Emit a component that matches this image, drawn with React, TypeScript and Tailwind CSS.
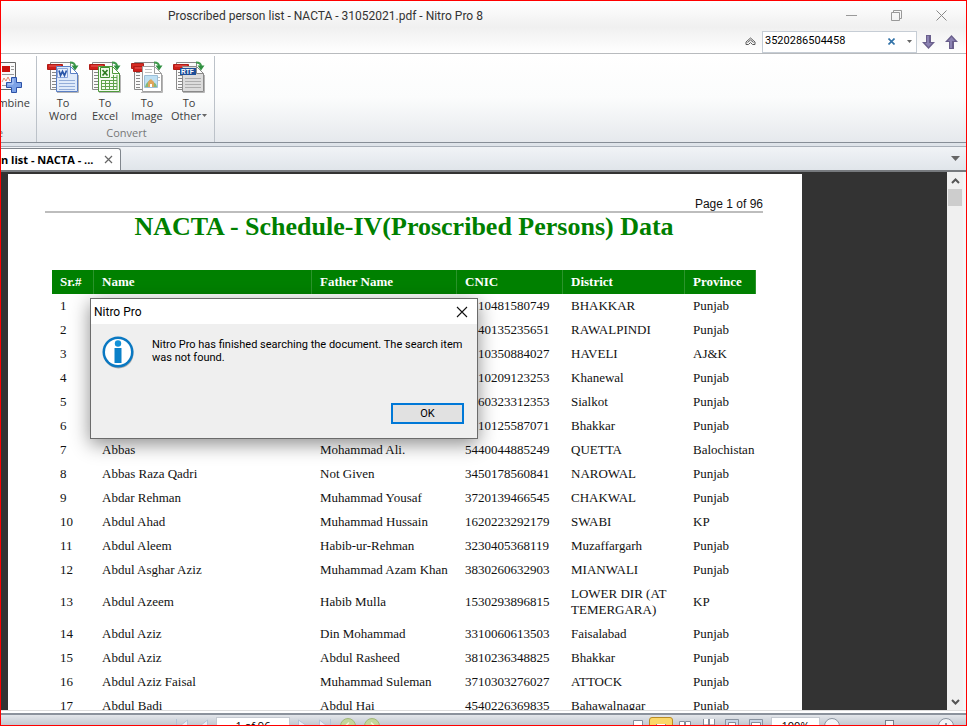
import React from "react";

type Kind = "word" | "excel" | "image" | "other";

// Rows 1-6 lie partly behind the dialog; only their uncovered values are listed.
const rows: string[][] = [
  ["1", "", "", "10481580749", "BHAKKAR", "Punjab"],
  ["2", "", "", "40135235651", "RAWALPINDI", "Punjab"],
  ["3", "", "", "10350884027", "HAVELI", "AJ&K"],
  ["4", "", "", "10209123253", "Khanewal", "Punjab"],
  ["5", "", "", "60323312353", "Sialkot", "Punjab"],
  ["6", "", "", "10125587071", "Bhakkar", "Punjab"],
  ["7", "Abbas", "Mohammad Ali.", "5440044885249", "QUETTA", "Balochistan"],
  ["8", "Abbas Raza Qadri", "Not Given", "3450178560841", "NAROWAL", "Punjab"],
  ["9", "Abdar Rehman", "Muhammad Yousaf", "3720139466545", "CHAKWAL", "Punjab"],
  ["10", "Abdul Ahad", "Muhammad Hussain", "1620223292179", "SWABI", "KP"],
  ["11", "Abdul Aleem", "Habib-ur-Rehman", "3230405368119", "Muzaffargarh", "Punjab"],
  ["12", "Abdul Asghar Aziz", "Muhammad Azam Khan", "3830260632903", "MIANWALI", "Punjab"],
  ["13", "Abdul Azeem", "Habib Mulla", "1530293896815", "LOWER DIR (AT TEMERGARA)", "KP"],
  ["14", "Abdul Aziz", "Din Mohammad", "3310060613503", "Faisalabad", "Punjab"],
  ["15", "Abdul Aziz", "Abdul Rasheed", "3810236348825", "Bhakkar", "Punjab"],
  ["16", "Abdul Aziz Faisal", "Muhammad Suleman", "3710303276027", "ATTOCK", "Punjab"],
  ["17", "Abdul Badi", "Abdul Hai", "4540226369835", "Bahawalnagar", "Punjab"],
];

function ConvertIcon({ kind }: { kind: Kind }) {
  const c = { word: "#5a7fc4", excel: "#4f9a3c", image: "#a0a0a0", other: "#8a8a8a" }[kind];
  const fill = { word: "#dfeafa", excel: "#f4fbf0", image: "#ffffff", other: "#dcdcdc" }[kind];
  const front = kind === "image" ? "M11.500 6.500h12l7 7v18h-19z" : "M9.500 6.500h14l7 7v18h-21z";
  return (
    <svg width="32" height="34" viewBox="0 0 32 34" aria-hidden="true">
      <path d="M3.500 2.500h20v27h-20z" fill="#fafafa" stroke="#8a8a8a" />
      <path d="M5 12.500h4M5 15.500h4M5 18.500h4M5 21.500h4M5 24.500h4M5 27.500h4" stroke="#888" />
      {kind === "image" && <path d="M0.500 3.500h12v5h-12z" fill="#d62b22" stroke="#a8231c" />}
      <path d={kind === "image" ? "M2.500 6.500h12v5h-12z" : "M0.500 4.500h15v5h-15z"} fill="#cf1f1a" stroke="#b01c16" />
      <path d={kind === "image" ? "M4 8h9" : "M2 6h12"} stroke="#e8615a" />
      <path d="M10 32.500h21.500V15" fill="none" stroke="#b5b5b5" />
      <path d={front} fill={fill} stroke={c} />
      <path d="M23.500 6.500v7h7z" fill="#fff" stroke={c} />
      <path d="M23 2.500c3 0 5 1 5 4" fill="none" stroke="#3f9a4c" strokeWidth="2" />
      <path d="M24.500 5.500h7l-3.500 5z" fill="#2f9040" />
      {kind === "word" && (
        <g>
          <path d="M10.500 8.500h10v9h-10z" fill="#e8effb" stroke="#8ba5da" />
          <path d="M12 10.500l1.500 5 2-4 2 4 2-5" fill="none" stroke="#2a56a8" strokeWidth="1.700" />
          <path d="M12 20.500h16M12 23.500h16M12 26.500h16M12 29.500h16" stroke="#93add9" />
        </g>
      )}
      {kind === "excel" && (
        <g>
          <path d="M11.500 7.500h9v10h-9z" fill="#eef9e8" stroke="#3e8d2d" />
          <path d="M13.500 10l5 5.500M18.500 10l-5 5.500" stroke="#2b7a1d" strokeWidth="1.700" />
          <path d="M12 20.500h16M12 23.500h16M12 26.500h16M12 29.500h16M12.500 20v10M16.500 20v10M20.500 20v10M24.500 15v15M28 15v15M22 17.500h6" stroke="#5da34b" />
        </g>
      )}
      {kind === "image" && (
        <g>
          <path d="M14 9.500h7M14 12.500h7M26 17.500h3M26 20.500h3" stroke="#c2c2c2" />
          <path d="M13.500 15.500h13v12h-13z" fill="#bfe0f3" stroke="#9cbfd8" />
          <path d="M14 27l1-3 4-4.500 6 4.500 1 3z" fill="#86b878" />
          <path d="M17 27v-5l3-3 3 3v5z" fill="#dea55c" />
          <path d="M19 24h2v3h-2z" fill="#fff" />
        </g>
      )}
      {kind === "other" && (
        <g>
          <path d="M7 8h16v7H7z" fill="#1d4f9a" />
          <text x="8" y="14" fontSize="6.500" fontWeight="bold" fill="#fff" fontFamily="Liberation Sans, sans-serif">RTF</text>
          <path d="M12 18.500h16M12 21.500h16M12 24.500h16M12 27.500h16" stroke="#adadad" />
        </g>
      )}
    </svg>
  );
}

function ConvertButton({ kind, label, menu }: { kind: Kind; label: string; menu?: boolean }) {
  return (
    <button className="flex w-[42px] flex-col items-center text-[11px] leading-[13px] text-[#3c3c3c]">
      <ConvertIcon kind={kind} />
      <span className="mt-[2px]">To</span>
      <span className="flex items-center gap-px whitespace-nowrap">
        {label}
        {menu && (
          <svg width="5" height="3" viewBox="0 0 5 3" aria-hidden="true"><path d="M0 0h5L2.500 3z" fill="#666" /></svg>
        )}
      </span>
    </button>
  );
}

function CombineIcon() {
  return (
    <svg width="32" height="34" viewBox="0 0 32 34" className="shrink-0" aria-hidden="true">
      <path d="M1.500 2.500h24v27h-24z" fill="#fafafa" stroke="#666" />
      <path d="M12 6h8v6h-8z" fill="#c9120d" />
      <path d="M21 6.500h3M21 9.500h3M12 14.500h12" stroke="#999" />
      <path d="M12 22l2-4 2 3 2-4 2 4" fill="none" stroke="#e08a70" />
      <path d="M12 25.500h7" stroke="#999" />
      <path d="M21.500 17.500h5v5h5v5h-5v5h-5v-5h-5v-5h5z" fill="#7da2e6" stroke="#2c51a6" />
      <path d="M23 19v5h-5" fill="none" stroke="#bcd0f7" />
    </svg>
  );
}

function SearchArrow({ up }: { up?: boolean }) {
  return (
    <svg width="13" height="14" viewBox="0 0 13 14" aria-hidden="true">
      <path d={up ? "M6.500 0L13 7H9v7H4V7H0z" : "M6.500 14L13 7H9V0H4v7H0z"} fill="#6a5f8c" />
      <path d={up ? "M6.500 2L10 6H7v7H5V6H3z" : "M6.500 12L10 8H7V1H5v7H3z"} fill="#8b82b2" />
    </svg>
  );
}

function TitleBar() {
  return (
    <header className="border-b border-[#b8bbbe] bg-gradient-to-b from-white via-[#f0f0f0] to-white text-[#333]">
      <div className="flex h-[29px] items-center pr-[2px]">
        <h1 className="flex-1 pl-[167px] font-[Roboto,sans-serif] text-[12px] leading-4">Proscribed person list - NACTA - 31052021.pdf - Nitro Pro 8</h1>
        <button aria-label="Minimize" className="flex w-[45px] justify-center">
          <svg width="11" height="11" viewBox="0 0 11 11"><path d="M0 5.500h11" stroke="#999" /></svg>
        </button>
        <button aria-label="Restore" className="flex w-[45px] justify-center">
          <svg width="11" height="11" viewBox="0 0 11 11"><path d="M.5 2.500h8v8h-8zM2.500 2.500v-2h8v8h-2" fill="none" stroke="#999" /></svg>
        </button>
        <button aria-label="Close" className="flex w-[45px] justify-center">
          <svg width="11" height="11" viewBox="0 0 11 11"><path d="M.5.5l10 10M10.500.5l-10 10" stroke="#888" /></svg>
        </button>
      </div>
      <div className="flex h-[23px] items-center justify-end pr-2">
        <button aria-label="Collapse ribbon" className="mr-[6px]">
          <svg width="11" height="9" viewBox="0 0 11 9">
            <path d="M1 5l4.500-4L10 5v2.500H7.500l-2-2-2 2H1zM2.500 5.500l3-2.500 3 2.500" fill="none" stroke="#5a5a5a" />
          </svg>
        </button>
        <form className="flex h-[22px] w-[155px] items-center border border-[#c6cdd5] bg-white pl-[2px]" onSubmit={(e) => e.preventDefault()}>
          <input aria-label="Find" defaultValue="3520286504458" className="h-[20px] w-0 flex-1 bg-transparent pb-[2px] font-[Roboto,sans-serif] text-[11px] text-black outline-none" />
          <button type="button" aria-label="Clear" className="mr-[12px]">
            <svg width="7" height="7" viewBox="0 0 7 7"><path d="M.5.5l6 6M6.500.5l-6 6" stroke="#3172a8" strokeWidth="1.600" /></svg>
          </button>
          <button type="button" aria-label="Find options" className="mr-[4px]">
            <svg width="5" height="3" viewBox="0 0 5 3"><path d="M0 0h5L2.500 3z" fill="#666" /></svg>
          </button>
        </form>
        <button aria-label="Find next" className="ml-[5px]"><SearchArrow /></button>
        <button aria-label="Find previous" className="ml-[10px]"><SearchArrow up /></button>
      </div>
    </header>
  );
}

function Ribbon() {
  return (
    <nav className="flex h-[89px] border-b border-[#878e97] bg-gradient-to-b from-white via-[#fbfcfc] to-[#e6e9ed]">
      <section className="mt-[2px] flex w-[36px] flex-col justify-between overflow-hidden border-r border-[#bcc2c9] pb-[2px]">
        <button className="mt-[4px] flex flex-col items-end self-end pr-[6px] text-[11px] leading-[13px] text-[#3c3c3c]">
          <span className="mr-[8px] flex w-[21px] justify-end overflow-hidden"><CombineIcon /></span>
          <span className="mt-[2px]">mbine</span>
        </button>
        <p className="-ml-[4px] text-[11px] leading-[14px] text-[#777]">e</p>
      </section>
      <section className="mt-[2px] flex w-[178px] flex-col justify-between border-r border-[#bcc2c9] pb-[2px]">
        <div className="mt-[4px] flex pl-[5px]">
          <ConvertButton kind="word" label="Word" />
          <ConvertButton kind="excel" label="Excel" />
          <ConvertButton kind="image" label="Image" />
          <ConvertButton kind="other" label="Other" menu />
        </div>
        <h2 className="pl-[2px] text-center text-[11px] leading-[14px] text-[#777]">Convert</h2>
      </section>
    </nav>
  );
}

function TabStrip() {
  return (
    <div className="flex h-[29px] flex-col border-b-2 border-[#777a7e] bg-gradient-to-b from-[#f4f6f9] to-[#e0e5ea]">
      <div className="h-1 border-b border-[#a9b0b9] bg-[#dfe4ea]" />
      <div className="flex flex-1 items-end justify-between">
        <div className="flex h-[22px] w-[120px] items-center justify-between rounded-tr-[3px] border-t border-r border-[#80868d] bg-white pr-[7px]">
          <span className="text-[11px] leading-4 font-bold text-black">n list - NACTA - ...</span>
          <button aria-label="Close tab">
            <svg width="9" height="9" viewBox="0 0 9 9"><path d="M1 1l7 7M8 1L1 8" stroke="#666" strokeWidth="1.200" /></svg>
          </button>
        </div>
        <button aria-label="Tab list" className="mr-[6px] flex h-full items-center">
          <svg width="9" height="5" viewBox="0 0 9 5"><path d="M0 0h9L4.500 5z" fill="#666" /></svg>
        </button>
      </div>
    </div>
  );
}

function DocumentPage() {
  return (
    <article className="mt-[2px] ml-[7px] w-[794px] shrink-0 bg-white pt-[23px] pr-[39px] pl-[37px] text-[#111]">
      <p className="border-b-2 border-[#bdbdbd] text-right font-['Liberation_Sans',Arial,sans-serif] text-[12px] leading-[14px]">Page 1 of 96</p>
      <h2 className="text-center font-['Liberation_Serif','Times_New_Roman',serif] text-[26px] leading-[28px] font-bold text-[#008000]">
        NACTA - Schedule-IV(Proscribed Persons) Data
      </h2>
      <table className="mt-[29px] ml-[7px] w-[704px] table-fixed border-collapse text-left font-['Liberation_Serif','Times_New_Roman',serif] text-[13px] leading-4">
        <colgroup>
          <col className="w-[42px]" />
          <col className="w-[218px]" />
          <col className="w-[145px]" />
          <col className="w-[106px]" />
          <col className="w-[122px]" />
          <col className="w-[71px]" />
        </colgroup>
        <thead>
          <tr className="bg-[#008000] text-white">
            {["Sr.#", "Name", "Father Name", "CNIC", "District", "Province"].map((h) => (
              <th key={h} scope="col" className="py-1 pl-2 font-bold shadow-[inset_-1px_0_0_#2b942b]">{h}</th>
            ))}
          </tr>
        </thead>
        <tbody>
          {rows.map((r) => (
            <tr key={r[0]}>
              {r.map((c, i) => (
                <td key={i} className={i === 3 && c.length < 13 ? "py-1 pl-[21px]" : "py-1 pl-2"}>{c}</td>
              ))}
            </tr>
          ))}
        </tbody>
      </table>
    </article>
  );
}

function Dialog() {
  return (
    <div role="dialog" aria-labelledby="dlg-title" className="absolute top-[126px] left-[89px] w-[388px] border border-[#6b6b6b] bg-[#efefef] font-[Roboto,sans-serif] text-black shadow-[0_5px_18px_rgba(0,0,0,0.45)]">
      <div className="flex h-[25px] items-center justify-between bg-white pr-[9px] pl-[3px]">
        <h3 id="dlg-title" className="text-[12px] leading-4">Nitro Pro</h3>
        <button aria-label="Close dialog">
          <svg width="12" height="12" viewBox="0 0 12 12"><path d="M1 1l10 10M11 1L1 11" stroke="#111" strokeWidth="1.100" /></svg>
        </button>
      </div>
      <div className="flex gap-[17px] pt-[12px] pl-[11px]">
        <svg width="33" height="33" viewBox="0 0 33 33" className="shrink-0" aria-hidden="true">
          <circle cx="16.500" cy="17.500" r="15" fill="#aaa" />
          <circle cx="16" cy="16" r="15.500" fill="#0a78c2" />
          <circle cx="16" cy="16" r="13" fill="#fff" />
          <circle cx="16" cy="7.500" r="3.200" fill="#1292d8" />
          <path d="M12.500 12h7v15h-7z" fill="#0a80c8" />
        </svg>
        <p className="pt-[2px] text-[11px] leading-[13px] whitespace-nowrap">
          Nitro Pro has finished searching the document. The search item
          <br />
          was not found.
        </p>
      </div>
      <div className="flex justify-end pt-[34px] pr-[13px] pb-[14px]">
        <button className="h-[21px] w-[73px] border-2 border-[#0078d7] bg-[#e1e1e1] text-[11px] leading-4">OK</button>
      </div>
    </div>
  );
}

function Scrollbar() {
  return (
    <div className="flex w-[16px] flex-col items-center bg-[#f0f0f0]">
      <button aria-label="Scroll up" className="flex h-[17px] items-center">
        <svg width="9" height="6" viewBox="0 0 9 6"><path d="M1 5l3.500-3.500L8 5" fill="none" stroke="#555" strokeWidth="2" /></svg>
      </button>
      <div className="h-[17px] w-[14px] bg-[#cdcdcd]" />
      <button aria-label="Scroll down" className="mt-auto flex h-[17px] items-center">
        <svg width="9" height="6" viewBox="0 0 9 6"><path d="M1 1l3.500 3.500L8 1" fill="none" stroke="#555" strokeWidth="2" /></svg>
      </button>
    </div>
  );
}

function NavGlyph({ d, label, w }: { d: string; label: string; w: number }) {
  return (
    <button aria-label={label} className="mt-[4px]">
      <svg width={w} height="14" viewBox={`0 0 ${w} 14`}><path d={d} fill="#e8edf4" stroke="#b4c3d6" /></svg>
    </button>
  );
}

function RoundButton({ label, green, d }: { label: string; green?: boolean; d: string }) {
  return (
    <button aria-label={label} className="mt-[3px]">
      <svg width="16" height="16" viewBox="0 0 16 16">
        <circle cx="8" cy="8" r="7.500" fill={green ? "#c3d69b" : "#f3f5f8"} stroke={green ? "#a3b87a" : "#8c95a1"} />
        <path d={d} fill="none" stroke={green ? "#eef5dc" : "#687280"} strokeWidth="1.500" />
      </svg>
    </button>
  );
}

function ViewGlyph({ label, d, framed }: { label: string; d: string; framed?: boolean }) {
  return (
    <button aria-label={label} className="mt-[4px]">
      <svg width="14" height="14" viewBox="0 0 14 14">
        {framed && <path d="M.5.5h13v13H.5z" fill="#c9d6e6" stroke="#8993a0" />}
        <path d={d} fill="#fff" stroke="#848d99" />
      </svg>
    </button>
  );
}

function StatusBar() {
  return (
    <footer className="h-[15px] shrink-0 border-t border-[#ddd] bg-white pt-[2px]">
      <div className="flex h-[12px] items-start justify-between overflow-hidden border-t-2 border-[#8b929c] bg-gradient-to-b from-[#e3e6ea] to-[#c3c9d1]">
        <div className="flex items-start gap-[8px] pl-[174px]">
          <NavGlyph label="First page" w={13} d="M1.500 0v13M12.500 1L5 7l7.500 6z" />
          <span className="ml-[3px] flex"><NavGlyph label="Previous page" w={9} d="M8.500 1L1 7l7.500 6z" /></span>
          <input aria-label="Page" defaultValue="1 of 96" className="mt-[2px] h-[20px] w-[74px] border border-[#c5cad1] bg-white pb-[4px] text-center text-[11px] leading-4 text-black" />
          <NavGlyph label="Next page" w={11} d="M.5 1L9 7 .5 13z" />
          <span className="ml-[2px] flex"><NavGlyph label="Last page" w={13} d="M11.500 0v13M.5 1L8 7 .5 13z" /></span>
          <RoundButton green label="Previous view" d="M9 4.500L5.500 8 9 11.500" />
          <RoundButton green label="Next view" d="M7 4.500L10.500 8 7 11.500" />
        </div>
        <div className="flex items-start gap-[8px] pr-[12px]">
          <span className="-mr-[4px] flex"><ViewGlyph label="Single page" d="M2.500 1.500h9v12h-9z" /></span>
          <div className="mt-[2px] flex h-[24px] w-[24px] justify-center rounded-[3px] border border-[#b98b25] bg-[#fbd768]">
            <span className="-mt-[1px] flex"><ViewGlyph label="Continuous" d="M2.500-1h9v8h-9z" /></span>
          </div>
          <span className="-ml-[3px] flex"><ViewGlyph label="Facing" d="M1.500 2.500h5v12h-5zM7.500 2.500h5v12h-5z" /></span>
          <span className="ml-[2px] flex"><ViewGlyph label="Continuous facing" d="M1.500-1h5v7h-5zM7.500-1h5v7h-5z" /></span>
          <span className="ml-[1px] flex"><ViewGlyph framed label="Fit page" d="M3.500 3.500h7v8h-7z" /></span>
          <span className="ml-[2px] flex"><ViewGlyph framed label="Fit width" d="M2.500 3.500h9v6h-9z" /></span>
          <input aria-label="Zoom" defaultValue="100%" className="mt-[2px] h-[20px] w-[49px] border border-[#c5cad1] bg-white pb-[4px] text-center text-[11px] leading-4 text-black" />
          <span className="-ml-[4px] flex"><RoundButton label="Zoom out" d="M5 8h6" /></span>
          <button aria-label="Zoom slider" className="mt-[5px] mr-[36px] ml-[37px] h-[14px] w-[9px] border border-[#777f8a] bg-[#f5f6f8]" />
          <RoundButton label="Zoom in" d="M5 8h6M8 5v6" />
        </div>
      </div>
    </footer>
  );
}

export default function App() {
  return (
    <div className="flex h-screen flex-col overflow-hidden border border-[#ff0000] bg-white font-['Open_Sans','Noto_Sans',sans-serif]">
      <TitleBar />
      <Ribbon />
      <TabStrip />
      <main className="relative flex min-h-0 flex-1 overflow-hidden border-r-[3px] border-[#f4f5f6] bg-[#333]">
        <div className="flex min-w-0 flex-1 overflow-hidden">
          <DocumentPage />
        </div>
        <Scrollbar />
        <Dialog />
      </main>
      <StatusBar />
    </div>
  );
}
